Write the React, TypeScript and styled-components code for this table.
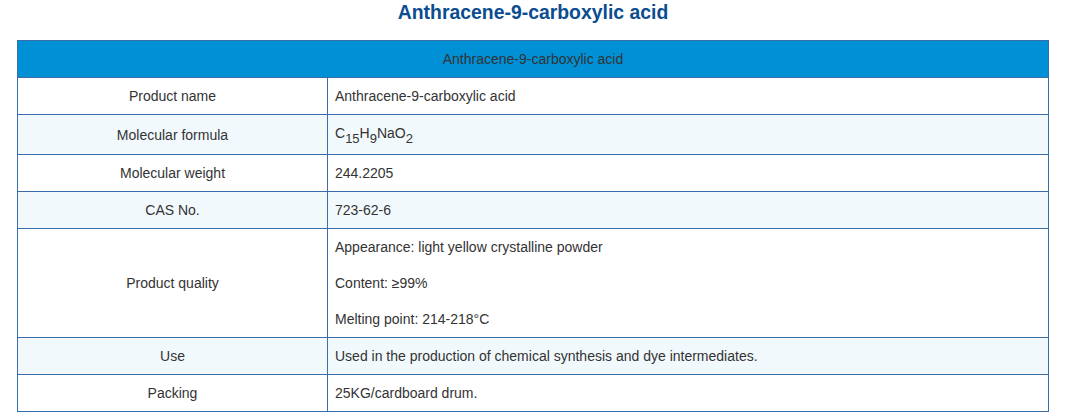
import React from 'react';
import styled, { createGlobalStyle } from 'styled-components';

const GlobalStyle = createGlobalStyle`
  body {
    margin: 0;
    background: #fff;
    font-family: "Liberation Sans", Arial, sans-serif;
  }
`;

const Container = styled.div`
  width: 1032px;
  margin: 0 auto;
`;

const Title = styled.h1`
  margin: 0 0 16px;
  font-size: 19.4px;
  line-height: 24px;
  font-weight: bold;
  text-align: center;
  color: #0b4d8f;
`;

const Table = styled.table`
  width: 100%;
  border-collapse: collapse;
  font-size: 14px;
  color: #333;
`;

const HeadCell = styled.th`
  background: #0090d6;
  border: 1px solid #3a6eaa;
  padding: 7px;
  line-height: 22px;
  font-weight: normal;
  text-align: center;
  color: #333;
`;

const Row = styled.tr<{ $alt?: boolean }>`
  background: ${(p) => (p.$alt ? '#f2f9fd' : '#fff')};
`;

const Label = styled.td`
  width: 295px;
  border: 1px solid #3a6eaa;
  padding: 7px;
  line-height: 22px;
  text-align: center;
`;

const Value = styled.td`
  border: 1px solid #3a6eaa;
  padding: 7px;
  line-height: 22px;
  text-align: left;
`;

const Para = styled.p`
  margin: 14px 0;
  &:first-child {
    margin-top: 0;
  }
  &:last-child {
    margin-bottom: 0;
  }
`;

const Sub = styled.sub`
  font-size: 13px;
  line-height: 17px;
  vertical-align: -5px;
`;

const App: React.FC = () => {
  return (
    <Container>
      <GlobalStyle />
      <Title>Anthracene-9-carboxylic acid</Title>
      <Table>
        <thead>
          <tr>
            <HeadCell colSpan={2}>Anthracene-9-carboxylic acid</HeadCell>
          </tr>
        </thead>
        <tbody>
          <Row>
            <Label>Product name</Label>
            <Value>Anthracene-9-carboxylic acid</Value>
          </Row>
          <Row $alt>
            <Label>Molecular formula</Label>
            <Value>
              C<Sub>15</Sub>H<Sub>9</Sub>NaO<Sub>2</Sub>
            </Value>
          </Row>
          <Row>
            <Label>Molecular weight</Label>
            <Value>244.2205</Value>
          </Row>
          <Row $alt>
            <Label>CAS No.</Label>
            <Value>723-62-6</Value>
          </Row>
          <Row>
            <Label>Product quality</Label>
            <Value>
              <Para>Appearance: light yellow crystalline powder</Para>
              <Para>Content: ≥99%</Para>
              <Para>Melting point: 214-218°C</Para>
            </Value>
          </Row>
          <Row $alt>
            <Label>Use</Label>
            <Value>Used in the production of chemical synthesis and dye intermediates.</Value>
          </Row>
          <Row>
            <Label>Packing</Label>
            <Value>25KG/cardboard drum.</Value>
          </Row>
        </tbody>
      </Table>
    </Container>
  );
};

export default App;
